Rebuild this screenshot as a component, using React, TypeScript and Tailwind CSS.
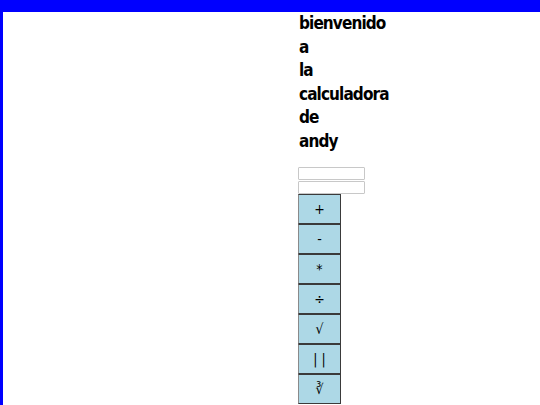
export default function App() {
  const ops = ["+", "-", "*", "÷", "√", "| |", "∛"]
  const words = ["bienvenido", "a", "la", "calculadora", "de", "andy"]

  return (
    <div className="min-h-[405px] bg-[#0000ff] pt-[12px] pl-[3px] overflow-hidden">
      <div className="min-h-[393px] bg-white">
        <div className="ml-[295px] w-[68px] flex flex-col">
          <h1
            className="text-[17px] leading-[23.5px] font-bold text-black whitespace-nowrap pl-[1px]"
            style={{ fontFamily: '"DejaVu Sans Condensed", sans-serif', letterSpacing: "-0.9px" }}
          >
            {words.map((w) => (
              <span key={w} className="block">
                {w}
              </span>
            ))}
          </h1>
          <div className="mt-[14px] flex flex-col gap-[1px]">
            <input className="h-[13px] w-[67px] border border-[#c8c8c8] rounded-[1px] bg-white" />
            <input className="h-[13px] w-[67px] border border-[#c8c8c8] rounded-[1px] bg-white" />
          </div>
          <div className="flex flex-col">
            {ops.map((op) => (
              <button
                key={op}
                className="h-[30px] w-[43px] bg-[#add8e6] border border-[#3a3a3a] border-l-[#8a8a8a] text-[14px] text-black flex items-center justify-center whitespace-pre"
                style={{ fontFamily: '"DejaVu Sans Condensed", sans-serif' }}
              >
                {op}
              </button>
            ))}
          </div>
        </div>
      </div>
    </div>
  )
}
